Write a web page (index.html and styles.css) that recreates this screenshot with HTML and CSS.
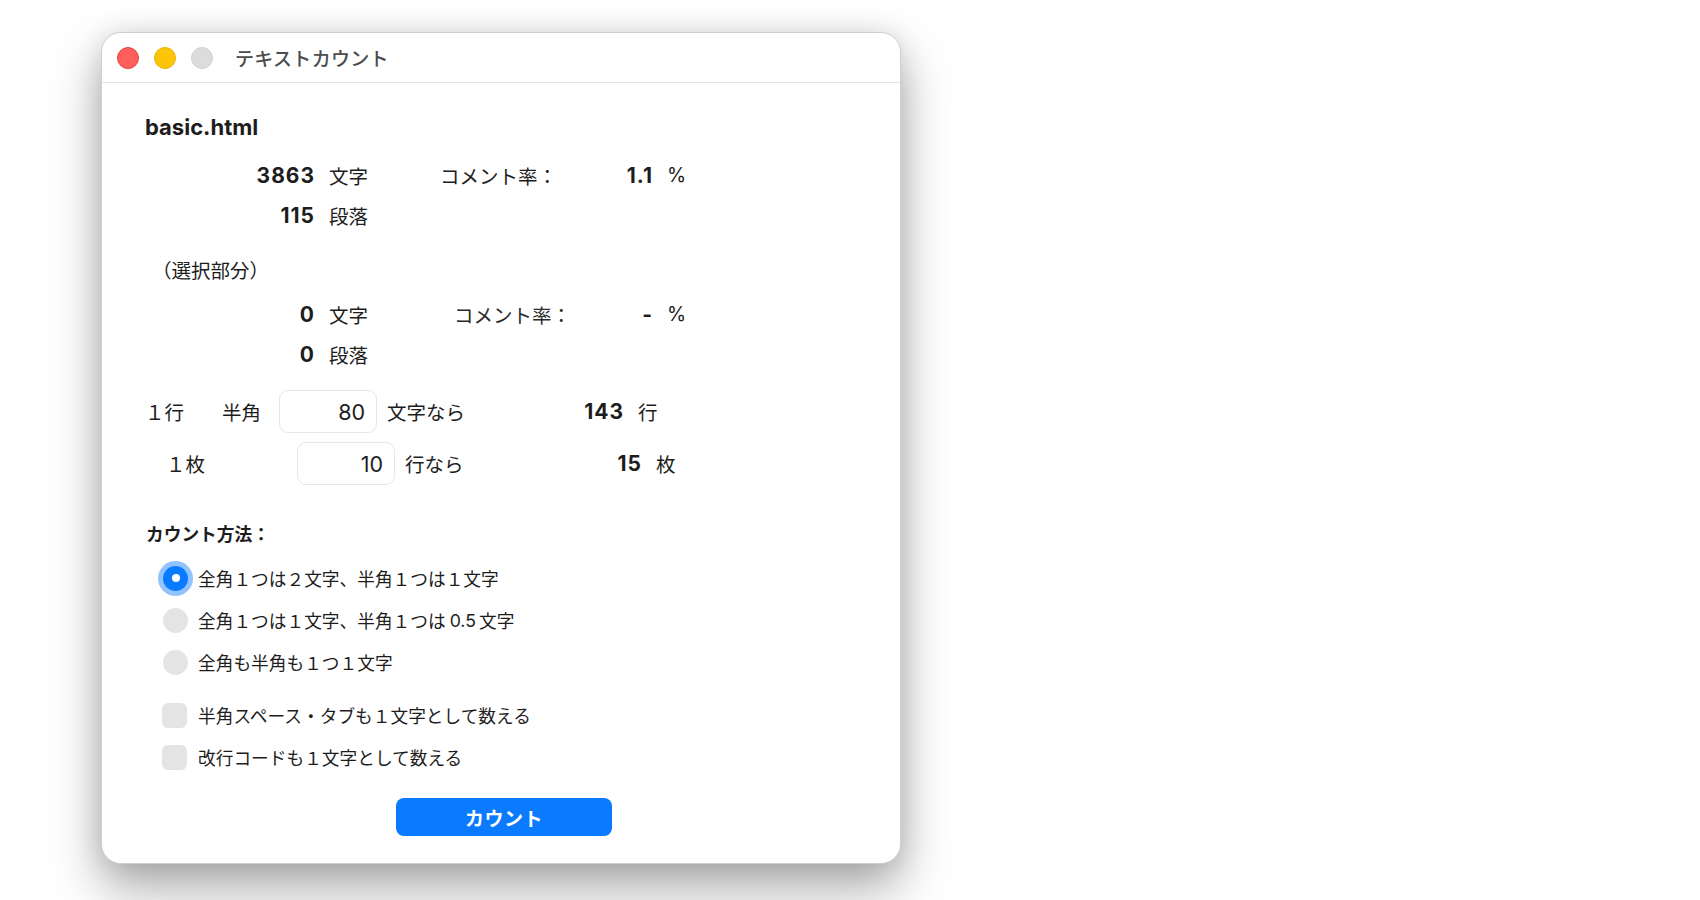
FILE: index.html
```html
<!DOCTYPE html>
<html lang="ja">
<head>
    <meta charset="UTF-8">
    <meta name="viewport" content="width=device-width, initial-scale=1.0">
    <title>テキストカウント</title>
    <link rel="stylesheet" href="styles.css">
</head>
<body>
    <div class="window">
        <div class="titlebar">
            <div class="lights">
                <span class="light close"></span>
                <span class="light minimize"></span>
                <span class="light zoom"></span>
            </div>
            <div class="title">テキストカウント</div>
        </div>

        <div class="content">
            <div class="filename">basic.html</div>

            <div class="stats">
                <div class="stat-row">
                    <span class="num">3863</span>
                    <span class="unit">文字</span>
                    <span class="label">コメント率：</span>
                    <span class="value">1.1</span>
                    <span class="pct">%</span>
                </div>
                <div class="stat-row">
                    <span class="num">115</span>
                    <span class="unit">段落</span>
                </div>
            </div>

            <div class="note">（選択部分）</div>

            <div class="stats selection">
                <div class="stat-row">
                    <span class="num">0</span>
                    <span class="unit">文字</span>
                    <span class="label">コメント率：</span>
                    <span class="value">-</span>
                    <span class="pct">%</span>
                </div>
                <div class="stat-row">
                    <span class="num">0</span>
                    <span class="unit">段落</span>
                </div>
            </div>

            <div class="lines">
                <div class="line-row">
                    <span class="line-label">１行</span>
                    <span class="line-sub">半角</span>
                    <input class="field" type="text" value="80" readonly>
                    <span class="line-text">文字なら</span>
                    <span class="result">143</span>
                    <span class="result-unit">行</span>
                </div>
                <div class="line-row sheet">
                    <span class="line-label">１枚</span>
                    <span class="line-sub"></span>
                    <input class="field" type="text" value="10" readonly>
                    <span class="line-text">行なら</span>
                    <span class="result">15</span>
                    <span class="result-unit">枚</span>
                </div>
            </div>

            <div class="method">
                <div class="method-title">カウント方法：</div>
                <div class="options">
                    <div class="option"><span class="radio checked"></span>全角１つは２文字、半角１つは１文字</div>
                    <div class="option"><span class="radio"></span>全角１つは１文字、半角１つは<span class="latin">0.5</span>文字</div>
                    <div class="option"><span class="radio"></span>全角も半角も１つ１文字</div>
                </div>
                <div class="options checks">
                    <div class="option"><span class="check"></span>半角スペース・タブも１文字として数える</div>
                    <div class="option"><span class="check"></span>改行コードも１文字として数える</div>
                </div>
            </div>

            <div class="actions">
                <button class="btn">カウント</button>
            </div>
        </div>
    </div>
</body>
</html>
```

FILE: styles.css
```css
html {
    background: #ffffff;
}
body {
    margin: 0;
    min-height: 900px;
    font-family: Inter, "Noto Sans CJK JP", sans-serif;
    color: #1d1d1d;
}
.window {
    box-sizing: border-box;
    width: 800px;
    height: 832px;
    margin: 32px 0 0 101px;
    background: #ffffff;
    border: 1px solid #cfcfcf;
    border-radius: 20px;
    box-shadow: 0 24px 50px rgba(0,0,0,0.34), 0 0 26px rgba(0,0,0,0.1);
    overflow: hidden;
}
.titlebar {
    height: 49px;
    border-bottom: 1px solid #e4e4e4;
    display: flex;
    align-items: center;
    padding-left: 15px;
}
.lights {
    display: flex;
    gap: 15px;
}
.light {
    box-sizing: border-box;
    width: 22px;
    height: 22px;
    border-radius: 50%;
}
.light.close {
    background: #ff5f5a;
    border: 1px solid #e5403a;
}
.light.minimize {
    background: #fdc508;
    border: 1px solid #e8b200;
}
.light.zoom {
    background: #dcdcdc;
    border: 1px solid #d0d0d0;
}
.title {
    margin-left: 22px;
    font-size: 19px;
    font-weight: 500;
    color: #4d4d4d;
    letter-spacing: 0.3px;
}
.content {
    padding: 32px 40px 0 40px;
}
.filename {
    font-size: 22px;
    font-weight: 700;
    line-height: 24px;
    padding-left: 3px;
}
.stats {
    margin-top: 16px;
}
.stat-row {
    display: grid;
    grid-template-columns: 173px 125px 150px 63px auto;
    align-items: center;
    height: 40px;
    font-size: 19.5px;
}
.num,
.value,
.result {
    font-size: 21px;
    font-weight: 700;
    text-align: right;
    letter-spacing: 1px;
}
.unit {
    padding-left: 14px;
}
.pct {
    padding-left: 14px;
}
.selection {
    margin-top: 3px;
}
.selection .label {
    padding-left: 14px;
    color: #2a2a2a;
}
.note {
    margin-top: 16px;
    height: 40px;
    line-height: 40px;
    font-size: 19.5px;
    padding-left: 10px;
}
.lines {
    margin-top: 16px;
    display: flex;
    flex-direction: column;
    gap: 9px;
}
.line-row {
    display: grid;
    grid-template-columns: 80px 57px 98px 184px 63px auto;
    align-items: center;
    height: 43px;
    font-size: 19.5px;
}
.line-label {
    padding-left: 3px;
}
.line-row.sheet {
    margin-left: 18px;
}
.line-row.sheet .line-label {
    padding-left: 6px;
}
.field {
    box-sizing: border-box;
    width: 98px;
    height: 43px;
    border: 1px solid #e6e6e6;
    border-radius: 9px;
    background: #ffffff;
    text-align: right;
    padding: 0 11px 0 0;
    font-family: Inter, "Noto Sans CJK JP", sans-serif;
    font-size: 21.5px;
    color: #1d1d1d;
    outline: none;
}
.line-text {
    padding-left: 10px;
}
.result-unit {
    padding-left: 14px;
}
.method {
    margin-top: 38px;
}
.method-title {
    font-size: 17.7px;
    font-weight: 700;
    line-height: 24px;
    padding-left: 4px;
}
.options {
    margin-top: 10px;
}
.options.checks {
    margin-top: 11px;
}
.option {
    display: flex;
    align-items: center;
    height: 42px;
    font-size: 17.7px;
}
.latin {
    margin: 0 3px 0 4px;
}
.radio {
    width: 25px;
    height: 25px;
    border-radius: 50%;
    background: #e4e4e4;
    margin: 0 10px 0 21px;
    display: flex;
    align-items: center;
    justify-content: center;
    flex-shrink: 0;
}
.radio.checked {
    background: #0a7aff;
    box-shadow: 0 0 0 5px rgba(10,122,255,0.45);
}
.radio.checked::after {
    content: "";
    width: 8px;
    height: 8px;
    border-radius: 50%;
    background: #ffffff;
}
.check {
    width: 25px;
    height: 25px;
    border-radius: 6px;
    background: #e4e4e4;
    margin: 0 11px 0 20px;
    flex-shrink: 0;
}
.actions {
    margin-top: 20px;
    display: flex;
    justify-content: center;
    padding-left: 6px;
}
.btn {
    width: 216px;
    height: 38px;
    border: none;
    border-radius: 8px;
    background: #0a7aff;
    color: #ffffff;
    font-family: Inter, "Noto Sans CJK JP", sans-serif;
    font-size: 19px;
    font-weight: 700;
    letter-spacing: 0.5px;
}
```
